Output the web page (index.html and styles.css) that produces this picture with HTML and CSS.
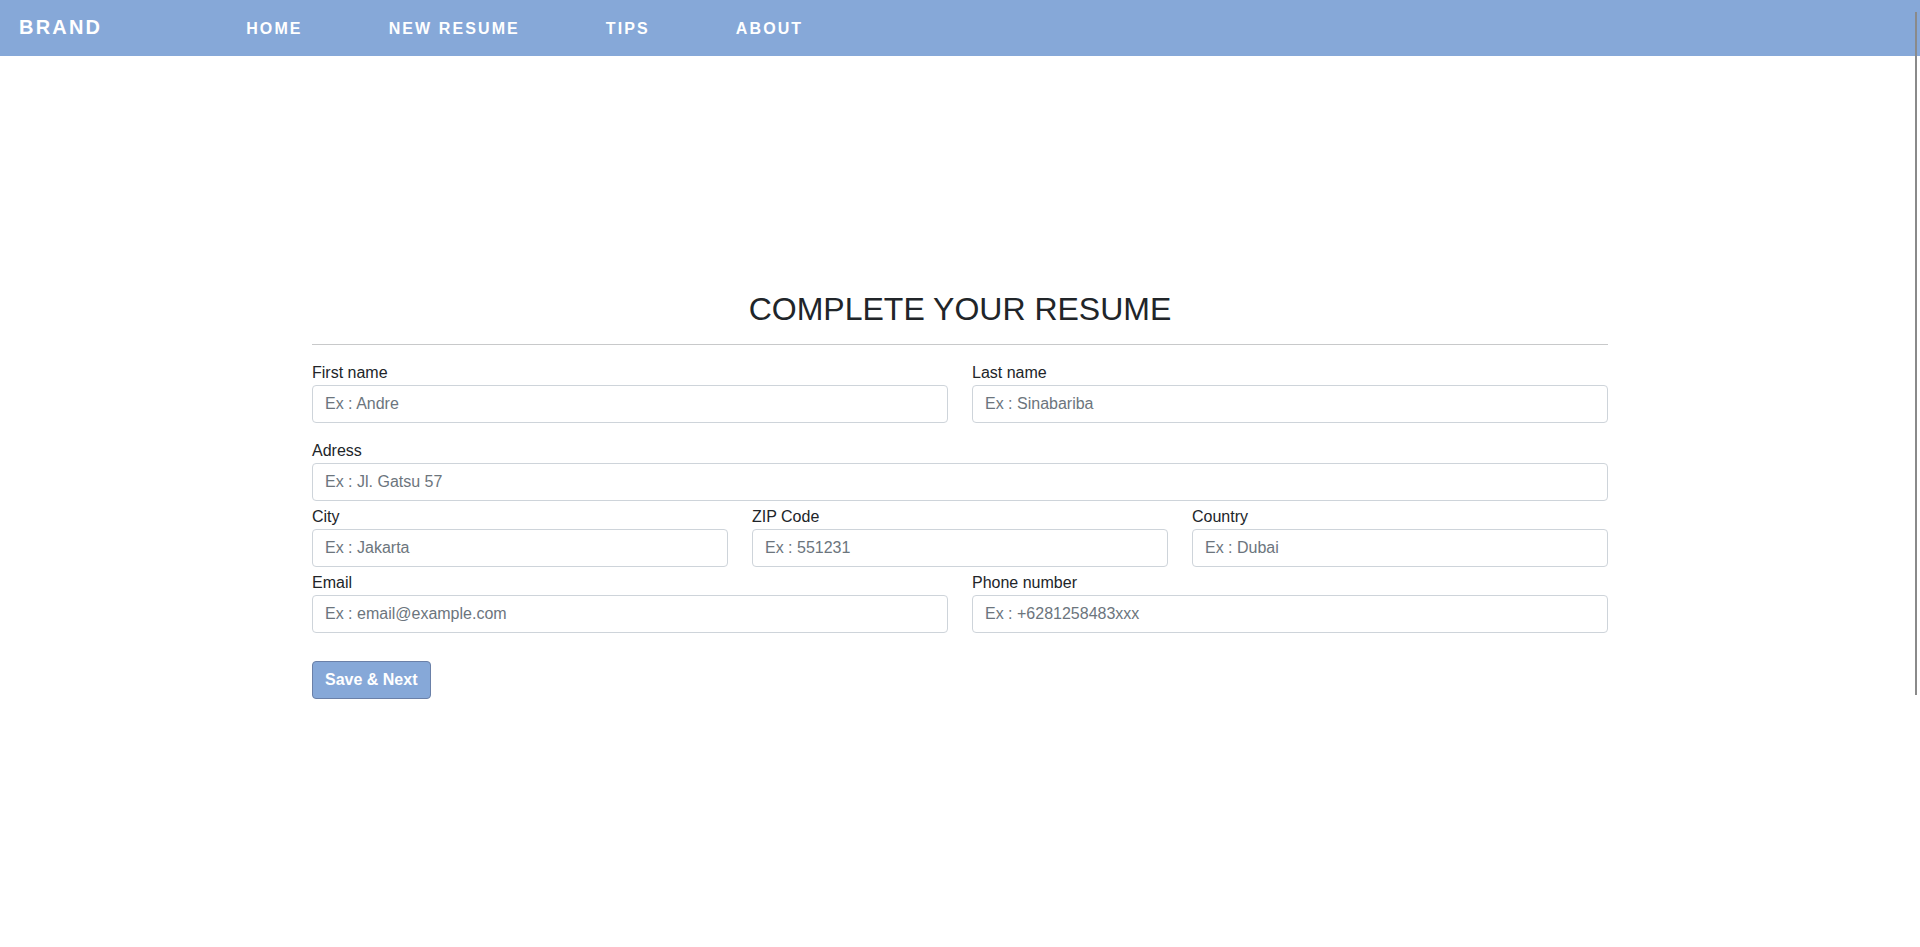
FILE: index.html
```html
<!DOCTYPE html>
<html lang="en">
<head>
<meta charset="utf-8">
<title>Complete your resume</title>
<link rel="stylesheet" href="styles.css">
</head>
<body>
<nav class="navbar">
  <a class="brand" href="#">BRAND</a>
  <ul class="nav-links">
    <li><a href="#">HOME</a></li>
    <li><a href="#">NEW RESUME</a></li>
    <li><a href="#">TIPS</a></li>
    <li><a href="#">ABOUT</a></li>
  </ul>
</nav>
<main class="container">
  <h2 class="title">COMPLETE YOUR RESUME</h2>
  <hr class="divider">
  <form class="resume-form">
    <div class="row cols-2 gap-lg">
      <div class="field">
        <label for="fname">First name</label>
        <input id="fname" type="text" placeholder="Ex : Andre">
      </div>
      <div class="field">
        <label for="lname">Last name</label>
        <input id="lname" type="text" placeholder="Ex : Sinabariba">
      </div>
    </div>
    <div class="row cols-1 gap-sm">
      <div class="field">
        <label for="address">Adress</label>
        <input id="address" type="text" placeholder="Ex : Jl. Gatsu 57">
      </div>
    </div>
    <div class="row cols-3 gap-sm">
      <div class="field">
        <label for="city">City</label>
        <input id="city" type="text" placeholder="Ex : Jakarta">
      </div>
      <div class="field">
        <label for="zip">ZIP Code</label>
        <input id="zip" type="text" placeholder="Ex : 551231">
      </div>
      <div class="field">
        <label for="country">Country</label>
        <input id="country" type="text" placeholder="Ex : Dubai">
      </div>
    </div>
    <div class="row cols-2 gap-btn">
      <div class="field">
        <label for="email">Email</label>
        <input id="email" type="email" placeholder="Ex : email@example.com">
      </div>
      <div class="field">
        <label for="phone">Phone number</label>
        <input id="phone" type="text" placeholder="Ex : +6281258483xxx">
      </div>
    </div>
    <button type="button" class="btn-save">Save &amp; Next</button>
  </form>
</main>
<div class="scroll-line"></div>
</body>
</html>
```
FILE: styles.css
```css
* { box-sizing: border-box; }

html, body {
  margin: 0;
  padding: 0;
  background: #ffffff;
}

body {
  font-family: "Liberation Sans", Arial, sans-serif;
  font-size: 16px;
  color: #212529;
}

.navbar {
  display: flex;
  align-items: baseline;
  height: 56px;
  padding: 16px 0 0 19px;
  background: #86a8d8;
}

.brand {
  font-size: 20px;
  font-weight: 700;
  letter-spacing: 2.2px;
  color: #ffffff;
  text-decoration: none;
}

.nav-links {
  display: flex;
  gap: 86px;
  list-style: none;
  margin: 0 0 0 144px;
  padding: 0;
}

.nav-links a {
  font-size: 16px;
  font-weight: 700;
  letter-spacing: 2.1px;
  color: #ffffff;
  text-decoration: none;
}

.container {
  width: 1296px;
  margin: 0 auto;
  padding-top: 234px;
}

.title {
  margin: 0;
  font-size: 32px;
  font-weight: 400;
  line-height: 1.2;
  text-align: center;
  color: #212529;
}

.divider {
  margin: 16px 0;
  border: 0;
  border-top: 1px solid #c8c9ca;
}

.row {
  display: grid;
  column-gap: 24px;
}

.cols-1 { grid-template-columns: 1fr; }
.cols-2 { grid-template-columns: 1fr 1fr; }
.cols-3 { grid-template-columns: 1fr 1fr 1fr; }

.gap-lg { margin-bottom: 16px; }
.gap-sm { margin-bottom: 4px; }
.gap-btn { margin-bottom: 28px; }

.field label {
  display: block;
  line-height: 24px;
  color: #212529;
}

.field input {
  display: block;
  width: 100%;
  height: 38px;
  padding: 6px 12px;
  font-family: inherit;
  font-size: 16px;
  line-height: 24px;
  color: #212529;
  background: #ffffff;
  border: 1px solid #ced4da;
  border-radius: 4px;
  outline: none;
}

.field input::placeholder {
  color: #6c757d;
  opacity: 1;
}

.btn-save {
  height: 38px;
  padding: 6px 12px;
  font-family: inherit;
  font-size: 16px;
  font-weight: 700;
  line-height: 24px;
  color: #ffffff;
  background: #86a8d8;
  border: 1px solid #6a80a8;
  border-radius: 4px;
  cursor: pointer;
}

.scroll-line {
  position: fixed;
  top: 12px;
  right: 3px;
  width: 2px;
  height: 683px;
  background: #8a8a8a;
}
```
